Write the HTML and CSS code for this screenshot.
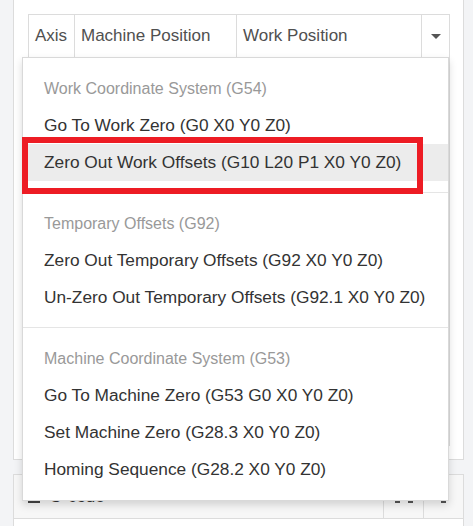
FILE: index.html
```html
<!DOCTYPE html>
<html>
<head>
<meta charset="utf-8">
<link rel="stylesheet" href="styles.css">
</head>
<body>
<div class="page">
  <div class="panel panel-axes">
    <div class="axes-table">
      <div class="axes-head">
        <div class="cell c-axis">Axis</div>
        <div class="cell c-mpos">Machine Position</div>
        <div class="cell c-wpos">Work Position</div>
        <div class="cell c-caret"><span class="caret"></span></div>
      </div>
      <div class="axes-body">
        <div class="row"></div>
        <div class="row"></div>
        <div class="row"></div>
        <div class="row"></div>
        <div class="row"></div>
        <div class="row"></div>
        <div class="row"></div>
        <div class="row"></div>
        <div class="row"></div>
      </div>
      <ul class="menu">
        <li class="menu-header">Work Coordinate System (G54)</li>
        <li class="menu-item">Go To Work Zero (G0 X0 Y0 Z0)</li>
        <li class="menu-item active">Zero Out Work Offsets (G10 L20 P1 X0 Y0 Z0)</li>
        <li class="divider"></li>
        <li class="menu-header">Temporary Offsets (G92)</li>
        <li class="menu-item">Zero Out Temporary Offsets (G92 X0 Y0 Z0)</li>
        <li class="menu-item">Un-Zero Out Temporary Offsets (G92.1 X0 Y0 Z0)</li>
        <li class="divider"></li>
        <li class="menu-header">Machine Coordinate System (G53)</li>
        <li class="menu-item">Go To Machine Zero (G53 G0 X0 Y0 Z0)</li>
        <li class="menu-item">Set Machine Zero (G28.3 X0 Y0 Z0)</li>
        <li class="menu-item">Homing Sequence (G28.2 X0 Y0 Z0)</li>
      </ul>
      <div class="highlight-box"></div>
    </div>
  </div>
  <div class="panel panel-gcode">
    <div class="gcode-head">
      <div class="gcode-title"><span class="bars"><i></i><i></i><i></i></span>G-code</div>
      <div class="gcode-btn wide"><span class="dot"></span><span class="dot"></span></div>
      <div class="gcode-btn"><span class="dot"></span></div>
    </div>
    <div class="gcode-body"></div>
  </div>
</div>
</body>
</html>
```
FILE: styles.css
```css
* { box-sizing: border-box; }
html, body {
  margin: 0;
  padding: 0;
  background: #f3f4f6;
  font-family: "Liberation Sans", Arial, sans-serif;
  color: #333;
  overflow: hidden;
}
.page {
  width: 473px;
  height: 526px;
  padding: 0 9px 0 13px;
  display: flex;
  flex-direction: column;
  gap: 14px;
}
.panel {
  background: #fff;
  border: 1px solid #dcdcdc;
}
.panel-axes {
  border-top: none;
  height: 460px;
  padding: 14px 13px 0 14px;
}
.axes-table {
  position: relative;
}
.axes-head {
  display: flex;
  height: 44px;
  border: 1px solid #dcdcdc;
  font-size: 17px;
  color: #505050;
}
.cell {
  display: flex;
  align-items: center;
  padding-left: 6px;
  border-right: 1px solid #dcdcdc;
}
.c-axis { width: 46px; }
.c-mpos { width: 162px; }
.c-wpos { width: 185px; }
.c-caret { flex: 1; border-right: none; justify-content: center; padding-left: 0; }
.caret {
  width: 0;
  height: 0;
  border-left: 5px solid transparent;
  border-right: 5px solid transparent;
  border-top: 5px solid #555;
  margin-top: 1px;
}
.axes-body {
  border: 1px solid #dcdcdc;
  border-top: none;
}
.axes-body .row {
  height: 43px;
  border-bottom: 1px solid #e2e2e2;
}
.menu {
  position: absolute;
  top: 43px;
  left: -6px;
  width: 427px;
  margin: 0;
  padding: 12px 0;
  list-style: none;
  background: #fff;
  border: 1px solid rgba(0, 0, 0, 0.15);
  box-shadow: 0 4px 8px rgba(0, 0, 0, 0.15);
}
.menu-header {
  height: 37px;
  line-height: 37px;
  padding: 0 21px;
  font-size: 16px;
  color: #999;
  white-space: nowrap;
}
.menu-item {
  height: 37px;
  line-height: 37px;
  padding: 0 21px;
  font-size: 17.3px;
  color: #333;
  white-space: nowrap;
}
.menu-item.active {
  background: #ececec;
}
.divider {
  height: 1px;
  margin: 11px 0 12px;
  background: #e5e5e5;
}
.highlight-box {
  position: absolute;
  left: -6px;
  top: 123px;
  width: 401px;
  height: 57px;
  border: 6px solid #ed1c24;
}
.panel-gcode {
  flex: 1;
  border-bottom: none;
}
.gcode-head {
  display: flex;
  height: 44px;
  background: #f7f7f7;
  border-bottom: 1px solid #dcdcdc;
  color: #333;
  font-size: 17px;
}
.gcode-title {
  flex: 1;
  display: flex;
  align-items: center;
  gap: 9px;
  padding-left: 14px;
}
.bars {
  display: flex;
  flex-direction: column;
  gap: 3px;
  width: 12px;
}
.bars i {
  display: block;
  height: 2px;
  background: #444;
}
.gcode-btn {
  width: 40px;
  border-left: 1px solid #dcdcdc;
  display: flex;
  align-items: center;
  justify-content: center;
  gap: 8px;
}
.dot {
  width: 5px;
  height: 4px;
  background: #555;
  margin-top: 8px;
}
.gcode-body {
  background: #fff;
}
```
